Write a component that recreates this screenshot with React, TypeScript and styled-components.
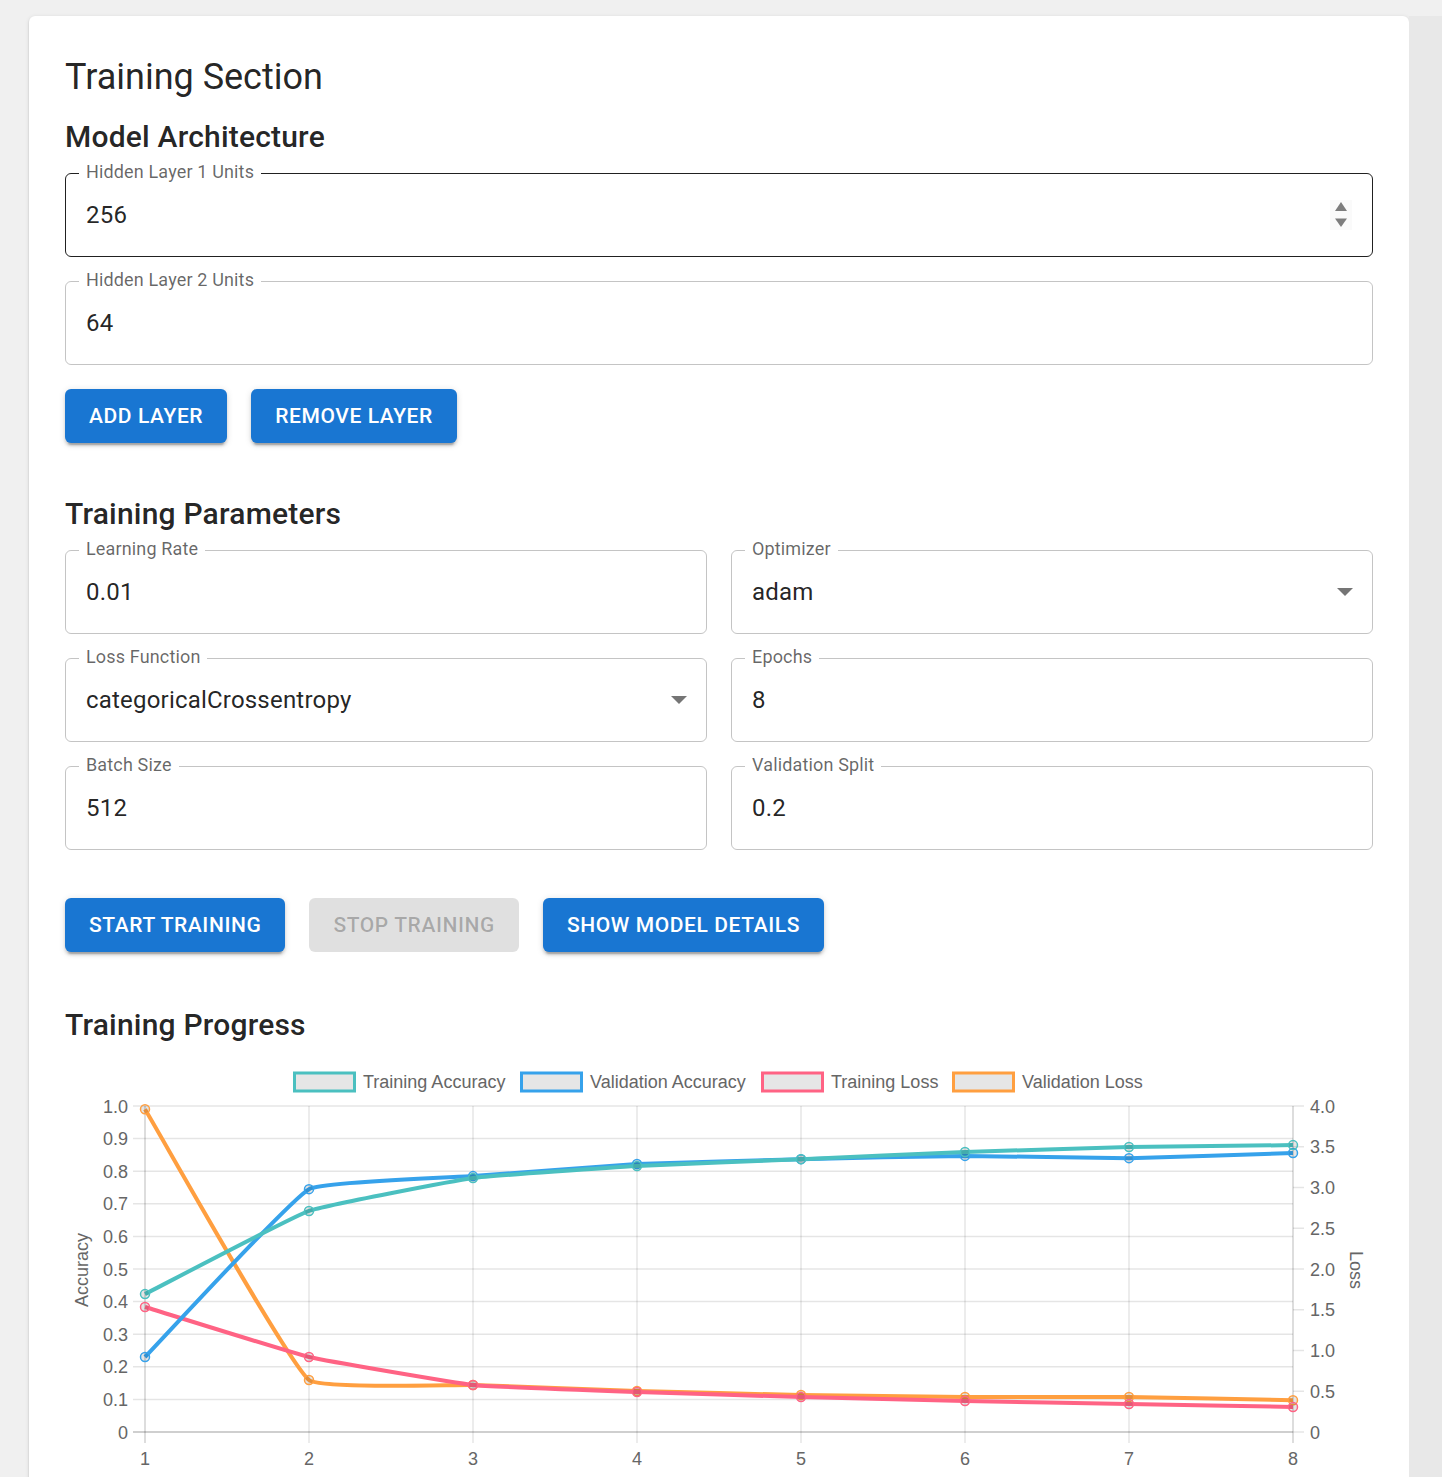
import React from 'react'
import styled, { createGlobalStyle } from 'styled-components'

const GlobalStyle = createGlobalStyle`
  body {
    margin: 0;
    background: #f0f0f0;
    font-family: Roboto, 'Liberation Sans', Arial, sans-serif;
    color: rgba(0, 0, 0, 0.87);
  }
`

// chart data, read off the training run
const EPOCHS = [1, 2, 3, 4, 5, 6, 7, 8]
const SERIES = [
  { label: 'Training Accuracy', color: 'rgb(75, 192, 192)', axis: 'acc', data: [0.423, 0.678, 0.779, 0.816, 0.837, 0.859, 0.874, 0.88] },
  { label: 'Validation Accuracy', color: 'rgb(54, 162, 235)', axis: 'acc', data: [0.23, 0.745, 0.785, 0.822, 0.837, 0.847, 0.84, 0.856] },
  { label: 'Training Loss', color: 'rgb(255, 99, 132)', axis: 'loss', data: [1.534, 0.92, 0.577, 0.49, 0.43, 0.38, 0.344, 0.307] },
  { label: 'Validation Loss', color: 'rgb(255, 159, 64)', axis: 'loss', data: [3.96, 0.638, 0.577, 0.503, 0.454, 0.43, 0.43, 0.39] },
]
const LEGEND_X = [228, 455, 696, 887]

const CHART_W = 1308
const CHART_H = 420
const AREA = { left: 80, right: 1228, top: 45, bottom: 371 }
const X_STEP = 164

const xAt = (i: number) => AREA.left + i * X_STEP
const yAcc = (v: number) => AREA.bottom - v * (AREA.bottom - AREA.top)
const yLoss = (v: number) => AREA.bottom - (v / 4) * (AREA.bottom - AREA.top)

type Pt = { x: number; y: number }

const cap = (v: number, lo: number, hi: number) => Math.max(lo, Math.min(hi, v))

// same spline as chart.js, light tension
const splinePath = (pts: Pt[], tension = 0.1) => {
  const ctrl = pts.map((cur, i) => {
    const prev = pts[i - 1] || cur
    const next = pts[i + 1] || cur
    const d01 = Math.hypot(cur.x - prev.x, cur.y - prev.y)
    const d12 = Math.hypot(next.x - cur.x, next.y - cur.y)
    let s01 = d01 / (d01 + d12)
    let s12 = d12 / (d01 + d12)
    if (isNaN(s01)) s01 = 0
    if (isNaN(s12)) s12 = 0
    const fa = tension * s01
    const fb = tension * s12
    return {
      p: { x: cur.x - fa * (next.x - prev.x), y: cap(cur.y - fa * (next.y - prev.y), AREA.top, AREA.bottom) },
      n: { x: cur.x + fb * (next.x - prev.x), y: cap(cur.y + fb * (next.y - prev.y), AREA.top, AREA.bottom) },
    }
  })
  let d = `M${pts[0].x},${pts[0].y}`
  for (let i = 1; i < pts.length; i++) {
    const a = ctrl[i - 1].n
    const b = ctrl[i].p
    d += ` C${a.x},${a.y} ${b.x},${b.y} ${pts[i].x},${pts[i].y}`
  }
  return d
}

const AccuracyTicks = [0, 0.1, 0.2, 0.3, 0.4, 0.5, 0.6, 0.7, 0.8, 0.9, 1]
const LossTicks = [0, 0.5, 1, 1.5, 2, 2.5, 3, 3.5, 4]

const TrainingChart: React.FC = () => {
  const lines = SERIES.map((s) => {
    const pts = s.data.map((v, i) => ({ x: xAt(i), y: s.axis === 'acc' ? yAcc(v) : yLoss(v) }))
    return { ...s, pts, d: splinePath(pts) }
  })

  return (
    <ChartSvg width={CHART_W} height={CHART_H} viewBox={`0 0 ${CHART_W} ${CHART_H}`}>
      {/* legend */}
      {SERIES.map((s, i) => (
        <g key={s.label}>
          <rect x={LEGEND_X[i] + 1.5} y={12} width={60} height={18} fill="#e6e6e6" stroke={s.color} strokeWidth={3} />
          <text x={LEGEND_X[i] + 70} y={27} className="legend">
            {s.label}
          </text>
        </g>
      ))}

      {/* horizontal grid + left ticks */}
      {AccuracyTicks.map((t) => (
        <g key={`a${t}`}>
          <line x1={AREA.left - 12} x2={AREA.right} y1={yAcc(t)} y2={yAcc(t)} stroke={t === 0 ? 'rgba(0,0,0,0.25)' : 'rgba(0,0,0,0.1)'} strokeWidth={1.5} />
          <text x={AREA.left - 17} y={yAcc(t) + 6.5} textAnchor="end" className="tick">
            {t === 0 ? '0' : t.toFixed(1)}
          </text>
        </g>
      ))}

      {/* right ticks */}
      {LossTicks.map((t) => (
        <g key={`l${t}`}>
          <line x1={AREA.right} x2={AREA.right + 11} y1={yLoss(t)} y2={yLoss(t)} stroke="rgba(0,0,0,0.1)" strokeWidth={1.5} />
          <text x={AREA.right + 17} y={yLoss(t) + 6.5} className="tick">
            {t === 0 ? '0' : t.toFixed(1)}
          </text>
        </g>
      ))}

      {/* vertical grid */}
      {EPOCHS.map((e, i) => (
        <g key={`x${e}`}>
          <line
            x1={xAt(i)}
            x2={xAt(i)}
            y1={AREA.top}
            y2={AREA.bottom + 11}
            stroke={i === 0 || i === EPOCHS.length - 1 ? 'rgba(0,0,0,0.18)' : 'rgba(0,0,0,0.1)'}
            strokeWidth={1.5}
          />
          <text x={xAt(i)} y={AREA.bottom + 33} textAnchor="middle" className="tick">
            {e}
          </text>
        </g>
      ))}

      <text className="tick" textAnchor="middle" transform={`translate(23, 209) rotate(-90)`}>
        Accuracy
      </text>
      <text className="tick" textAnchor="middle" transform={`translate(1285, 209) rotate(90)`}>
        Loss
      </text>

      {[...lines].reverse().map((l) => (
        <g key={l.label}>
          <path d={l.d} fill="none" stroke={l.color} strokeWidth={4} strokeLinejoin="round" />
          {l.pts.map((p, i) => (
            <circle key={i} cx={p.x} cy={p.y} r={4.5} fill="rgba(0,0,0,0.1)" stroke={l.color} strokeWidth={1.5} />
          ))}
        </g>
      ))}
    </ChartSvg>
  )
}

const SpinIcon = () => (
  <svg width="22" height="30" viewBox="0 0 22 30">
    <rect x="0" y="0" width="22" height="30" fill="#fafafa" />
    <path d="M5 11 L11 2 L17 11 Z" fill="#7d7d7d" />
    <path d="M5 18.5 L11 27 L17 18.5 Z" fill="#7d7d7d" />
  </svg>
)

const DropIcon = () => (
  <svg width="16" height="8" viewBox="0 0 16 8">
    <path d="M0 0 L16 0 L8 8 Z" fill="rgba(0,0,0,0.54)" />
  </svg>
)

interface FieldProps {
  label: string
  value: string
  active?: boolean
  select?: boolean
  spinner?: boolean
}

const Field: React.FC<FieldProps> = ({ label, value, active, select, spinner }) => (
  <FieldBox $active={active} $select={select}>
    <FieldLabel>{label}</FieldLabel>
    <FieldValue>{value}</FieldValue>
    {spinner && <SpinIcon />}
    {select && <DropIcon />}
  </FieldBox>
)

const App: React.FC = () => (
  <>
    <GlobalStyle />
    <Shell>
      <Card>
        <PageTitle>Training Section</PageTitle>
        <SectionTitle>Model Architecture</SectionTitle>
        <FieldStack>
          <Field label="Hidden Layer 1 Units" value="256" active spinner />
          <Field label="Hidden Layer 2 Units" value="64" />
        </FieldStack>
        <ButtonRow $top={24}>
          <ActionButton>Add Layer</ActionButton>
          <ActionButton>Remove Layer</ActionButton>
        </ButtonRow>

        <SectionTitle $top={47}>Training Parameters</SectionTitle>
        <ParamGrid>
          <Field label="Learning Rate" value="0.01" />
          <Field label="Optimizer" value="adam" select />
          <Field label="Loss Function" value="categoricalCrossentropy" select />
          <Field label="Epochs" value="8" />
          <Field label="Batch Size" value="512" />
          <Field label="Validation Split" value="0.2" />
        </ParamGrid>
        <ButtonRow $top={48}>
          <ActionButton>Start Training</ActionButton>
          <ActionButton disabled>Stop Training</ActionButton>
          <ActionButton>Show Model Details</ActionButton>
        </ButtonRow>

        <SectionTitle $top={49}>Training Progress</SectionTitle>
        <TrainingChart />
      </Card>
      <SideStrip />
    </Shell>
  </>
)

const Shell = styled.div`
  display: flex;
  align-items: stretch;
  padding: 16px 0 0 29px;
  min-height: 1477px;
  box-sizing: border-box;
`

const Card = styled.div`
  flex: 1;
  background: #ffffff;
  border-radius: 6px;
  padding: 36px;
  box-shadow: 0px 3px 1.5px -1.5px rgba(0, 0, 0, 0.2), 0px 1.5px 1.5px 0px rgba(0, 0, 0, 0.14),
    0px 1.5px 4.5px 0px rgba(0, 0, 0, 0.12);
`

const SideStrip = styled.div`
  width: 33px;
  flex-shrink: 0;
  background: #e8e8e8;
`

const PageTitle = styled.h1`
  margin: 1px 0 12px;
  font-size: 36px;
  font-weight: 400;
  line-height: 48px;
`

const SectionTitle = styled.h2<{ $top?: number }>`
  margin: ${({ $top }) => $top || 0}px 0 12px;
  font-size: 30px;
  font-weight: 500;
  line-height: 48px;
  letter-spacing: 0.2px;
`

const FieldStack = styled.div`
  display: flex;
  flex-direction: column;
  gap: 24px;
`

const ParamGrid = styled.div`
  display: grid;
  grid-template-columns: 1fr 1fr;
  gap: 24px;
`

const FieldBox = styled.div<{ $active?: boolean; $select?: boolean }>`
  position: relative;
  display: flex;
  align-items: center;
  gap: 12px;
  height: 84px;
  box-sizing: border-box;
  padding: 0 ${({ $select }) => ($select ? 19 : 20)}px 0 20px;
  border: 1.5px solid ${({ $active }) => ($active ? 'rgba(0, 0, 0, 0.87)' : 'rgba(0, 0, 0, 0.23)')};
  border-radius: 6px;
`

const FieldLabel = styled.span`
  position: absolute;
  top: -13px;
  left: 13px;
  padding: 0 7px;
  background: #ffffff;
  font-size: 18px;
  line-height: 22px;
  color: rgba(0, 0, 0, 0.6);
  letter-spacing: 0.15px;
`

const FieldValue = styled.div`
  flex: 1;
  font-size: 24px;
  line-height: 34px;
  letter-spacing: 0.2px;
  color: rgba(0, 0, 0, 0.87);
`

const ButtonRow = styled.div<{ $top: number }>`
  display: flex;
  gap: 24px;
  margin-top: ${({ $top }) => $top}px;
`

const ActionButton = styled.button`
  height: 54px;
  padding: 0 24px;
  border: none;
  border-radius: 6px;
  background: #1976d2;
  color: #ffffff;
  font-family: Roboto, 'Liberation Sans', Arial, sans-serif;
  font-size: 21px;
  font-weight: 500;
  letter-spacing: 0.6px;
  text-transform: uppercase;
  box-shadow: 0px 4.5px 1.5px -3px rgba(0, 0, 0, 0.2), 0px 3px 3px 0px rgba(0, 0, 0, 0.14),
    0px 1.5px 7.5px 0px rgba(0, 0, 0, 0.12);
  cursor: pointer;

  &:disabled {
    background: rgba(0, 0, 0, 0.12);
    color: rgba(0, 0, 0, 0.26);
    box-shadow: none;
    cursor: default;
  }
`

const ChartSvg = styled.svg`
  display: block;

  text {
    font-family: 'Liberation Sans', Arial, sans-serif;
    font-size: 18px;
    fill: #666666;
  }
`

export default App
